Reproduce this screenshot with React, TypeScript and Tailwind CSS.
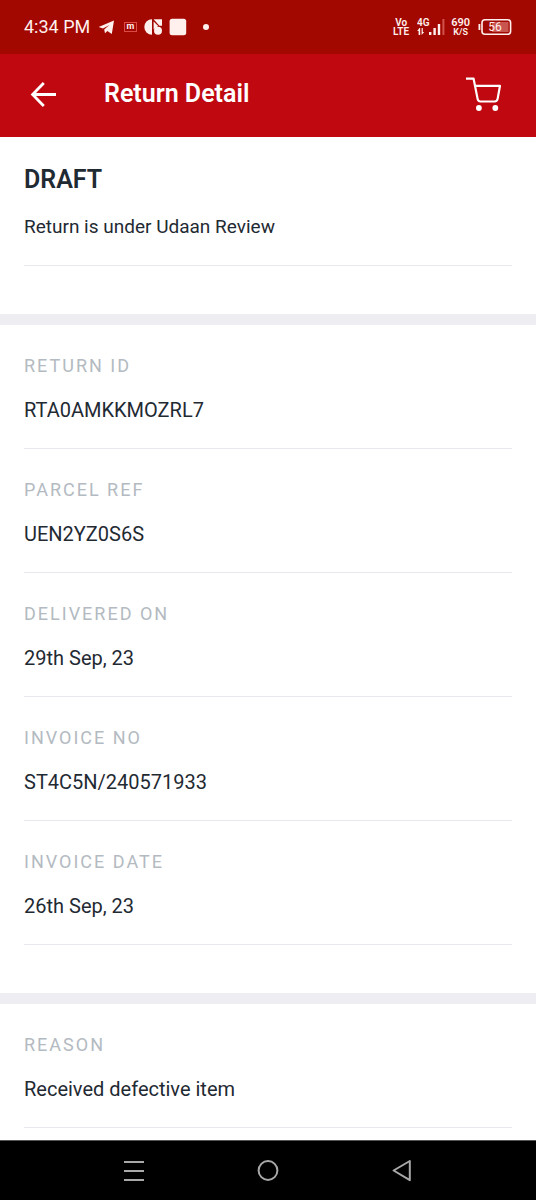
/**
 * Return detail screen
 * Status bar, app header, return info rows and system navigation
 */

import React from 'react';

interface Detail {
    label: string;
    value: string;
}

const returnDetails: Detail[] = [
    { label: 'RETURN ID', value: 'RTA0AMKKMOZRL7' },
    { label: 'PARCEL REF', value: 'UEN2YZ0S6S' },
    { label: 'DELIVERED ON', value: '29th Sep, 23' },
    { label: 'INVOICE NO', value: 'ST4C5N/240571933' },
    { label: 'INVOICE DATE', value: '26th Sep, 23' },
];

const reasonDetails: Detail[] = [{ label: 'REASON', value: 'Received defective item' }];

const App: React.FC = () => (
    <div className="min-h-screen flex flex-col bg-white font-['Roboto',sans-serif] text-[#1f2a33]">
        <StatusBar />
        <Header />

        <main className="flex-1">
            {/* Current status */}
            <section className="px-6 pt-[25px] pb-12">
                <div className="border-b border-[#e8e9ec] pb-6">
                    <h2 className="text-[25px] leading-9 font-semibold">DRAFT</h2>
                    <p className="mt-[15px] text-[19px] leading-7">Return is under Udaan Review</p>
                </div>
            </section>

            <Separator />
            <section className="px-6 pb-12">
                <DetailList items={returnDetails} />
            </section>

            <Separator />
            <section className="px-6">
                <DetailList items={reasonDetails} />
            </section>
        </main>

        <SystemNav />
    </div>
);

const Separator: React.FC = () => <div className="h-[11px] bg-[#eeeef2]" />;

// Label and value rows
const DetailList: React.FC<{ items: Detail[] }> = ({ items }) => (
    <dl>
        {items.map((item) => (
            <div key={item.label} className="border-b border-[#e8e9ec] pt-[27px] pb-6">
                <dt className="text-[18px] leading-7 tracking-[2px] text-[#b3bac1]">{item.label}</dt>
                <dd className="mt-4 text-[20px] leading-7">{item.value}</dd>
            </div>
        ))}
    </dl>
);

// Back button, title and cart
const Header: React.FC = () => (
    <header className="h-[83px] flex items-center bg-[#c00811] px-6 pb-[3px] text-white">
        <button type="button" aria-label="Back" className="size-10 flex items-center justify-center">
            <svg width="28" height="28" viewBox="0 0 28 28" fill="none" stroke="currentColor" strokeWidth="2.8">
                <path d="M13.8 3 2.6 14.5 13.8 26M2.6 14.5H26" />
            </svg>
        </button>
        <h1 className="ml-10 flex-1 text-[25px] leading-8 font-semibold">Return Detail</h1>
        <button type="button" aria-label="Cart" className="size-14 flex items-center justify-center">
            <svg width="36" height="36" viewBox="0 0 36 36" fill="none" stroke="currentColor" strokeWidth="2.2" strokeLinejoin="round">
                <path d="M0 2.7h7.6l4 20.2q.5 2.6 2.8 2.6h14.3q2.4 0 2.9-2.6L34 9.8H9" />
                <circle cx="12.9" cy="32" r="2.9" fill="currentColor" stroke="none" />
                <circle cx="29.3" cy="32" r="2.9" fill="currentColor" stroke="none" />
            </svg>
        </button>
    </header>
);

// Phone status bar
const StatusBar: React.FC = () => (
    <div className="h-[54px] flex items-center justify-between bg-[#a30800] px-6 text-[#fff0ee]">
        <div className="flex items-center">
            <span className="text-[18px] leading-6">4:34 PM</span>
            <svg className="ml-2" width="114" height="20" viewBox="0 0 114 20" fill="currentColor" aria-hidden="true">
                {/* Paper plane */}
                <path d="M.6 10 16 3.4 13.8 17 9.4 14 7 16.2 6.2 12.4 11.4 8 5 11.6z" />
                {/* Message */}
                <rect x="26.5" y="5.5" width="12" height="9" fill="none" stroke="#dc4c46" />
                <text x="32.5" y="12.4" fontSize="9" fontWeight="700" textAnchor="middle">m</text>
                {/* Split shapes */}
                <path d="M54 2.3v15.4a7.7 7.7 0 0 1 0-15.4z" />
                <path d="M55.6 2.3H64v6.5h-2.6z" />
                <path d="M55.6 4.4 60.2 9 55.6 12.4z" />
                <circle cx="60" cy="13.8" r="4" />
                <rect x="71.6" y="1.7" width="16.6" height="16.6" rx="2.5" />
                <circle cx="108" cy="10" r="3" />
            </svg>
        </div>

        <div className="flex items-center">
            <div className="flex flex-col text-center text-[10px] leading-[9px] font-semibold">
                <span>Vo</span>
                <span>LTE</span>
            </div>
            {/* Signal strength */}
            <svg className="ml-2" width="28" height="20" viewBox="0 0 28 20" fill="currentColor" aria-hidden="true">
                <text x="0" y="9" fontSize="10" fontWeight="600">4G</text>
                <path d="M2.4 11 .2 14h1.4v4h1.6v-7zM4.6 11v7L7.2 15H5.8v-4z" />
                <rect x="12" y="15" width="2.4" height="3" />
                <rect x="16.4" y="11" width="2.4" height="7" />
                <rect x="20.8" y="7" width="2.4" height="11" />
                <rect x="25.4" y="2" width="2" height="16" fill="#d0524c" />
            </svg>
            <div className="ml-[6px] flex flex-col items-center font-semibold">
                <span className="text-[11px] leading-[10px]">690</span>
                <span className="text-[9px] leading-[8px]">K/S</span>
            </div>
            <svg className="ml-2" width="34" height="18" viewBox="0 0 34 18" fill="none" aria-hidden="true">
                <path d="M1.4 6v6" stroke="currentColor" strokeWidth="1.8" />
                <rect x="4" y="1.8" width="28.6" height="14.4" rx="3" stroke="currentColor" strokeWidth="1.6" />
                <rect x="14" y="4" width="16.5" height="10" fill="#c85550" />
                <text x="17" y="13.4" fontSize="12" textAnchor="middle" fill="currentColor">56</text>
            </svg>
        </div>
    </div>
);

// Android navigation buttons
const SystemNav: React.FC = () => (
    <nav className="h-15 flex items-center justify-center gap-[94px] border-t border-[#555] bg-black text-[#a8a8a8]">
        <button type="button" aria-label="Recent apps" className="size-10 flex items-center justify-center">
            <svg width="20" height="20" viewBox="0 0 20 20" fill="currentColor">
                <path d="M0 0h20v2H0zM0 9h20v2H0zM0 18h20v2H0z" />
            </svg>
        </button>
        <button type="button" aria-label="Home" className="size-10 flex items-center justify-center">
            <svg width="22" height="22" viewBox="0 0 22 22" fill="none" stroke="currentColor" strokeWidth="2">
                <circle cx="11" cy="10.5" r="9.4" />
            </svg>
        </button>
        <button type="button" aria-label="Back to previous screen" className="size-10 flex items-center justify-center">
            <svg width="22" height="22" viewBox="0 0 22 22" fill="none" stroke="currentColor" strokeWidth="2" strokeLinejoin="round">
                <path d="M18.8 1v19.2L2.6 10.5z" />
            </svg>
        </button>
    </nav>
);

export default App;
